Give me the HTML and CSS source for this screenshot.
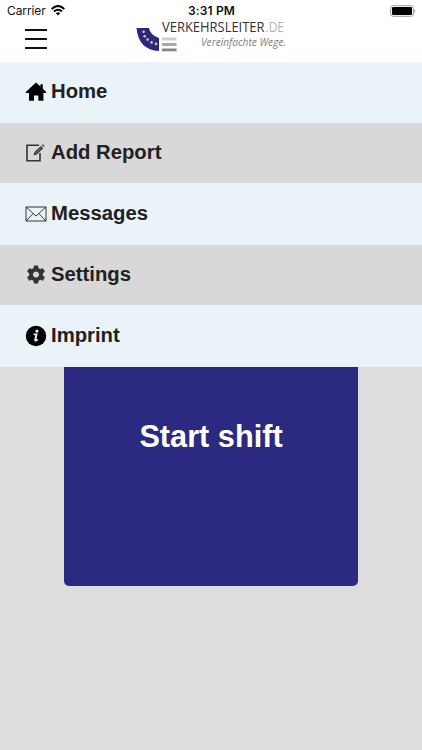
FILE: index.html
```html
<!DOCTYPE html>
<html lang="en">
<head>
<meta charset="utf-8">
<title>Verkehrsleiter</title>
<link rel="stylesheet" href="styles.css">
</head>
<body>
<header class="header">
  <div class="status">
    <div class="carrier">Carrier
      <svg width="14" height="11" viewBox="0 0 14 11"><g fill="none" stroke="#000" stroke-width="2"><path d="M.7 4Q7-2 13.3 4"/><path d="M3 6.5q4-3.5 8 0"/></g><path d="M4.9 8.2q2.1-1.7 4.2 0L7 10.4z"/></svg>
    </div>
    <time class="clock">3:31 PM</time>
    <svg class="battery" width="26" height="12" viewBox="0 0 26 12"><rect x=".7" y=".7" width="22.6" height="10.6" rx="2.5" fill="#fff" stroke="#999"/><rect x="2" y="2" width="20" height="8" rx="1.3"/><path d="M24.3 4q2.2 2 0 4z" fill="#999"/></svg>
  </div>
  <div class="toolbar">
    <button class="burger" aria-label="Menu"><span></span><span></span><span></span></button>
    <svg class="logo" width="162" height="40" viewBox="0 -4 162 40">
      <path d="M1.5 9H14Q15 16 24 19V32Q3.5 31 1.5 9Z" fill="#29277f"/>
      <g fill="#e8c98a"><circle cx="8.6" cy="12.8" r="1.3"/><circle cx="9.7" cy="17.2" r="1.3"/><circle cx="12.6" cy="20.6" r="1.3"/><circle cx="16.6" cy="23.4" r="1.3"/><circle cx="21" cy="24.9" r="1.3"/></g>
      <path fill="#cfcfcf" d="M27 18.5h14.5v3H27z"/><path fill="#aaa" d="M27 24h14.5v3H27z"/><path fill="#858585" d="M27 29.5h14.5v2.8H27z"/>
      <text class="brand" x="27" y="13" textLength="102.5" lengthAdjust="spacingAndGlyphs">VERKEHRSLEITER</text>
      <text class="brand tld" x="130.5" y="13" textLength="18.5" lengthAdjust="spacingAndGlyphs">.DE</text>
      <text class="claim" x="66" y="27" textLength="85" lengthAdjust="spacingAndGlyphs">Vereinfachte Wege.</text>
    </svg>
  </div>
</header>
<nav class="menu">
  <a class="item"><svg class="icon" viewBox="0 0 22 22"><path d="M11 1.5l4.5 4.1V3.2h2.3v4.5l3.7 3.5-1 .8H18.4v7.8h-5v-5.2H9v5.2H4V12H1.5l-1-.8z"/></svg>Home</a>
  <a class="item"><svg class="icon" viewBox="0 0 22 22"><path d="M14 3.3H2v15.5H15V11" fill="none" stroke="#333" stroke-width="1.6"/><path d="M8.5 13.5l1-3.4 6.4-6.2 2.3 2.3-6.5 6.3zM16.8 3l1-.8 1.7 1.7-.9 1.2z" fill="#333"/><path d="M10.3 11.5l6-5.8" stroke="#d8d8d8" stroke-width=".5"/></svg>Add Report</a>
  <a class="item"><svg class="icon" viewBox="0 0 22 22"><path d="M1 4h20v14H1zM1 4l10 9 10-9M1 18l7.2-7.5M21 18l-7.2-7.5" fill="none" stroke="#222" stroke-width=".9"/></svg>Messages</a>
  <a class="item"><svg class="icon" viewBox="0 0 22 22"><path fill="#303536" fill-rule="evenodd" d="M9 1.5h4l.6 2.7 1.6.9 2.7-.9 2 3.4-2.1 1.9v1.9l2.1 1.9-2 3.4-2.7-.9-1.6.9-.6 2.7H9l-.6-2.7-1.6-.9-2.7.9-2-3.4 2.1-1.9V9.5L2.1 7.6l2-3.4 2.7.9 1.6-.9zM11 7.4a3.1 3.1 0 1 0 .01 0z"/></svg>Settings</a>
  <a class="item"><svg class="icon" viewBox="0 0 22 22"><circle cx="11" cy="11" r="10.2"/><circle cx="11.9" cy="6.1" r="1.6" fill="#eaf3f8"/><path d="M8.6 9.4h2.9L10.2 15q-.1 1.1 2.5-.3" fill="none" stroke="#eaf3f8" stroke-width="1.9"/></svg>Imprint</a>
</nav>
<main class="main"><button class="shift">Start shift</button></main>
</body>
</html>
```
FILE: styles.css
```css
* { box-sizing: border-box; }
body {
  margin: 0;
  height: 750px;
  overflow: hidden;
  display: flex;
  flex-direction: column;
  background: #ddd;
  font-family: "Liberation Sans", Arial, sans-serif;
}
.header { height: 62px; background: #fff; }
.status {
  height: 21px;
  padding: 0 6px 0 7px;
  display: grid;
  grid-template-columns: 1fr auto 1fr;
  align-items: center;
  font: 12px/21px Inter, sans-serif;
  color: #111;
}
.carrier { display: flex; align-items: center; gap: 5px; letter-spacing: -.1px; }
.clock { font-weight: 600; letter-spacing: .15px; }
.battery { justify-self: end; }
.toolbar { display: flex; align-items: flex-start; }
.burger {
  display: flex;
  flex-direction: column;
  gap: 7px;
  width: 22px;
  margin: 8px 0 0 25px;
  padding: 0;
  border: 0;
  background: none;
}
.burger span { height: 2px; background: #111; }
.logo { margin: -6px 0 0 88px; }
.brand { font: 14.5px "Open Sans", sans-serif; fill: #333; }
.tld { fill: #b5b5b5; }
.claim { font: italic 10.5px "Open Sans", sans-serif; fill: #808080; }
.menu { display: grid; grid-template-rows: 61px 60px 62px 60px 62px; }
.item {
  display: flex;
  align-items: center;
  gap: 4px;
  padding: 0 0 2px 25px;
  background: #eaf3f8;
  color: #212121;
  font-size: 20.3px;
  font-weight: 700;
}
.item:nth-child(even) { background: #d8d8d8; }
.icon { width: 22px; height: 22px; margin-top: 1px; }
.main { display: flex; justify-content: center; }
.shift {
  width: 294px;
  height: 219px;
  padding: 0 0 80px;
  border: 0;
  border-radius: 0 0 5px 5px;
  background: #2c2a80;
  color: #fff;
  font: 700 30.7px "Liberation Sans", Arial, sans-serif;
}
```
